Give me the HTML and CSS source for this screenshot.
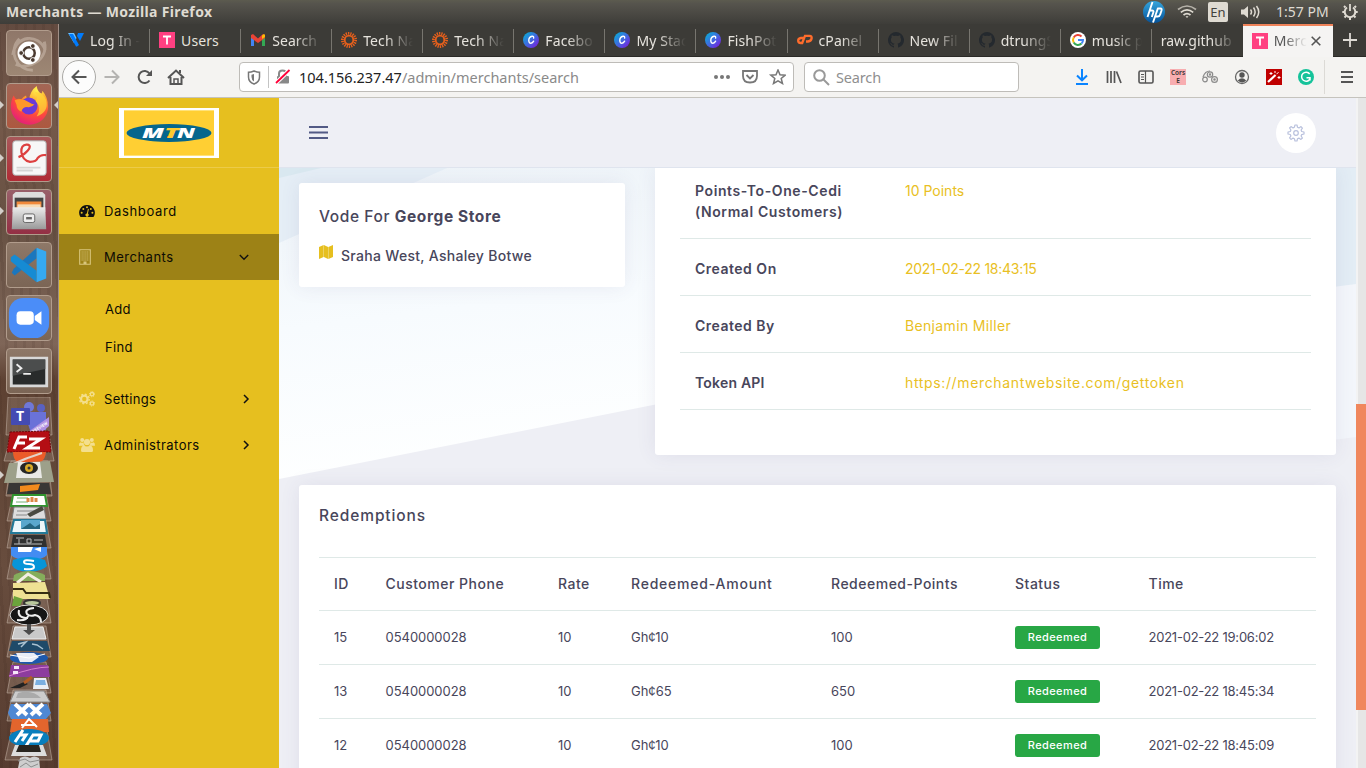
FILE: index.html
```html
<!DOCTYPE html>
<html lang="en">
<head>
<meta charset="utf-8">
<title>Merchants</title>
<link rel="stylesheet" href="styles.css">
</head>
<body>
<svg width="0" height="0" class="defs">
  <defs>
    <linearGradient id="canva" x1="0" y1="0" x2="1" y2="1"><stop offset="0" stop-color="#00b8d4"/><stop offset=".5" stop-color="#3f6be0"/><stop offset="1" stop-color="#8210dc"/></linearGradient>
    <radialGradient id="fox" cx=".7" cy=".1" r="1"><stop offset="0" stop-color="#fff44f"/><stop offset=".35" stop-color="#ffa02a"/><stop offset=".65" stop-color="#ff4a3c"/><stop offset="1" stop-color="#e01a82"/></radialGradient>
    <linearGradient id="metal" x1="0" y1="0" x2="0" y2="1"><stop offset="0" stop-color="#ececec"/><stop offset="1" stop-color="#999"/></linearGradient>
    <linearGradient id="hpg" x1="0" y1="0" x2="0" y2="1"><stop offset="0" stop-color="#35a5dc"/><stop offset="1" stop-color="#04529a"/></linearGradient>
    <symbol id="i-canva" viewBox="0 0 16 16"><circle cx="8" cy="8" r="8" fill="url(#canva)"/><path d="M10.600 6.100c.3-1.400-.5-2-1.500-1.900C7 4.500 5.700 6.600 5.800 8.800c.1 1.700 1 2.500 2.100 2.400 1.200-.1 2.100-.9 2.700-2" fill="none" stroke="#fff" stroke-width="1.400" stroke-linecap="round"/></symbol>
    <symbol id="i-sun" viewBox="0 0 16 16"><circle cx="8" cy="8" r="4.300" fill="none" stroke="#e8601c" stroke-width="1.800"/><circle cx="8" cy="8" r="6.600" fill="none" stroke="#e8601c" stroke-width="2.800" stroke-dasharray="1.300 1"/></symbol>
    <symbol id="i-git" viewBox="0 0 16 16"><path d="M8 0a8 8 0 0 0-2.500 15.600c.4.1.5-.2.500-.4v-1.500c-2.200.5-2.700-.9-2.700-.9-.4-.9-.9-1.200-.9-1.200-.7-.5.1-.5.100-.5.8.1 1.200.8 1.200.8.7 1.200 1.900.9 2.300.7.1-.5.3-.9.500-1.100-1.800-.2-3.600-.9-3.600-4 0-.9.300-1.600.8-2.100-.1-.2-.4-1 .1-2.100 0 0 .7-.2 2.200.8a7.600 7.600 0 0 1 4 0c1.500-1 2.200-.8 2.200-.8.4 1.100.2 1.900.1 2.100.5.600.8 1.300.8 2.100 0 3.100-1.900 3.800-3.700 4 .3.300.6.800.6 1.500v2.200c0 .2.100.5.500.4A8 8 0 0 0 8 0z" fill="#24292e"/></symbol>
    <symbol id="i-t" viewBox="0 0 16 16"><rect width="16" height="16" fill="#ff4081"/><path d="M4 4.500h8M8 4.500V12.500" stroke="#fff" stroke-width="1.800"/></symbol>
    <symbol id="i-hp" viewBox="0 0 24 24"><circle cx="12" cy="12" r="11" fill="url(#hpg)"/><path d="M10.500 2L5.500 17M7.500 10.500h2.500q2 0 1.300 2L9.800 17M16 8L11 22.500M15.500 8.500h3q1.600 0 1 2l-1.300 4q-.6 2-2.500 2h-3" fill="none" stroke="#fff" stroke-width="1.900"/></symbol>
  </defs>
</svg>
<div class="screen">
  <header class="panel">
    <span class="panel-title">Merchants — Mozilla Firefox</span>
    <div class="panel-tray">
      <svg width="24" height="24"><use href="#i-hp"/></svg>
      <svg class="wifi" width="20" height="16" viewBox="0 0 20 16" fill="none" stroke="#dfdbd2" stroke-width="1.700"><path d="M1 5.500q9-7 18 0" opacity=".7"/><path d="M3.800 8.300q6.200-4.800 12.400 0"/><path d="M6.500 11q3.500-2.700 7 0"/><path d="M8.500 12.200h3L10 14z" fill="#dfdbd2" stroke="none"/></svg>
      <span class="lang">En</span>
      <svg class="sound" width="21" height="16" viewBox="0 0 21 16" fill="none" stroke="#dfdbd2" stroke-width="1.500"><path d="M1 5.500h3l4-3.500v12l-4-3.500H1z" fill="#dfdbd2" stroke="none"/><path d="M10.500 5.500q2 2.500 0 5M13.500 3.500q3.300 4.500 0 9M16.500 2q4.500 6 0 12"/></svg>
      <span class="clock">1:57 PM</span>
      <svg width="16" height="16" viewBox="0 0 16 16" fill="none" stroke="#dfdbd2"><path d="M5 3.500a5.300 5.300 0 1 0 6 0" stroke-width="2"/><path d="M8 0v7" stroke-width="1.800"/><path d="M3.500 3.500L2 2M12.500 3.500L14 2M2.500 8H.3M13.500 8h2.200M4 12l-1.500 1.500M12 12l1.500 1.500M8 13.500V16" stroke-width="2"/></svg>
    </div>
  </header>
  <div class="desktop">
    <nav class="dock">
      <div class="tile ubuntu"><svg viewBox="0 0 46 46"><path d="M6 25C9 4 33 2 40 20M39 11c5 18-15 30-30 24M13 8C1 20 9 41 27 41" fill="none" stroke="#d9cabd" opacity=".45" stroke-width="3"/><circle cx="23" cy="23" r="12" fill="#fff"/><circle cx="23" cy="23" r="6" fill="none" stroke="#4a3a30" stroke-width="2.600"/><g fill="#4a3a30" stroke="#fff"><circle cx="14.800" cy="23" r="2.500"/><circle cx="27" cy="15.700" r="2.500"/><circle cx="27" cy="30.300" r="2.500"/></g></svg></div>
      <div class="tile firefox"><svg viewBox="0 0 46 46"><path d="M7 12q1 3 3 4 2-1 5 0 2-3 5-4 0 4 3 5 1-10 8-15 1 6 5 8 1-1 1-3 6 7 6 17A19 18 0 0 1 4 24q0-7 3-12z" fill="url(#fox)"/><circle cx="23" cy="23" r="9" fill="#6b3ad8"/><path d="M8 17q8-3 15 2 4 3 6 2-3 4-8 3-5 0-6 5-5-2-5-7z" fill="#ff9828"/><path d="M29 8q4 5 1 10 7 7 1 16 13-5 10-17-2-7-12-9z" fill="#ffd13a" opacity=".75"/></svg></div>
      <div class="tile pdf"><svg viewBox="0 0 46 46"><rect x="6" y="4" width="35" height="36" rx="3" fill="#f7f7f7" stroke="#aaa"/><path d="M10 32h25M10 35h17" stroke="#d5d5d5" stroke-width="2"/><path d="M12 21C18 19 29 9 21 8c-9-1-8 16 3 18q7 0 8-4 3-4 9-3" fill="none" stroke="#dd4040" stroke-width="2.300"/></svg></div>
      <div class="tile files"><svg viewBox="0 0 46 46"><path d="M6 5l3-3h28l3 3v18H6z" fill="#ddd"/><path d="M8 8h30v15H8z" fill="#444"/><path d="M10 12h26v11H10z" fill="#f18a3c"/><path d="M11 15h24v8H11z" fill="#f8ddb9"/><path d="M6 18h34l1 23H5z" fill="url(#metal)"/><rect x="17" y="25" width="12" height="9" rx="2" fill="#eee" stroke="#666"/><path d="M20 29.500h6" stroke="#666" stroke-width="2.500"/></svg></div>
      <div class="tile"><svg viewBox="0 0 46 46"><path d="M31 5v11L8 34l-3-3 2-4z" fill="#1b76bd"/><path d="M31 40V29L8 12l-4 3v4l27 22z" fill="#168bd3"/><path d="M31 5l10 4v28l-10 4z" fill="#35a9f1"/></svg></div>
      <div class="tile"><svg viewBox="0 0 46 46"><rect x="2" y="2" width="42" height="42" rx="15" fill="#4b8df8"/><rect x="10" y="16" width="18" height="14" rx="4" fill="#fff"/><path d="M29 21l7-5v14l-7-5z" fill="#fff"/></svg></div>
      <div class="tile"><svg viewBox="0 0 46 46"><path d="M3 8h40v32H3z" fill="#d8d8d8"/><path d="M6 11h34v26H6z" fill="#292b2b"/><path d="M6 11h34v10L6 28z" fill="#4b4d4d"/><path d="M10 16l5 4-5 4M17 26h8" fill="none" stroke="#eee" stroke-width="2"/></svg></div>
      <svg class="stack" viewBox="0 397 58 371">
        <g fill="#bba898" fill-opacity=".25" stroke="#c4b3a5" stroke-opacity=".55"><path d="M8 397h42l2 38H6z"/><path d="M11 435h38l5 26H4z"/><path d="M11 461h37l4 35H6z"/><path d="M13 494h33l5 27H7z"/><path d="M12 520h34l5 28H7z"/><path d="M13 548h33l5 31H7z"/><path d="M13 592h33l5 31H7z"/><path d="M13 626h33l5 31H7z"/><path d="M13 662h33l5 31H7z"/><path d="M13 690h33l5 31H7z"/><path d="M13 724h33l6 36H5z"/></g>
        <circle cx="29" cy="407" r="5" fill="#6f78d8"/><circle cx="41" cy="408" r="4" fill="#5961c3"/><path d="M24 412h22v18H30z" fill="#6a72d8"/><rect x="11" y="408" width="19" height="17" rx="1" fill="#444bb3"/><text x="16" y="421" class="dock-letter">T</text><path d="M28 432l21-15v9l-12 11z" fill="#b091e2"/><text transform="translate(33 433) rotate(-31)" class="ribbon">PREVIEW</text>
        <path d="M10 432l39-1 2 21H7z" fill="#b40e14" stroke="#710b0c" stroke-dasharray="2 1"/><path d="M27 437H19l-5 12M17 443h8M29 439h12L27 448h13" fill="none" stroke="#fff" stroke-width="3"/>
        <path d="M13 452h33q-1 13-17 13t-16-13z" fill="#eb5b29"/><path d="M11 465q15-7 31-12" stroke="#e4d2c8" stroke-width="2"/>
        <path d="M9 463l41-2 4 21-50 1z" fill="#9da08a"/><path d="M18 462h22l2 16H16z" fill="#e9e9e6"/><ellipse cx="29" cy="468" rx="9" ry="6" fill="#252525"/><circle cx="29" cy="468" r="4" fill="#d8aa27"/><circle cx="29" cy="468" r="1.500" fill="#333"/>
        <path d="M9 483h40l2 11H7z" fill="#393735"/><path d="M20 486l20-2-2 6-18 2z" fill="#f28a1d"/>
        <path d="M13 495h32l2 11H11z" fill="#fff" stroke="#30932e" stroke-width="2"/><path d="M17 498h11M16 502h12" stroke="#75b174"/><path d="M28 502V498M32 502v-5M36 502v-4" stroke="#dc8847" stroke-width="3"/>
        <path d="M14 507h30l2 12H12z" fill="#ddd" stroke="#777"/><path d="M17 511h17M16 515h11" stroke="#888"/><path d="M27 514l15-8 2 4-14 7z" fill="#4a4a40"/>
        <path d="M14 520h31l2 13H11z" fill="#eef7fb" stroke="#237998" stroke-width="2"/><path d="M21 520h19v9H21z" fill="#5ba7cd"/><path d="M21 529l9-6 5 4 5-3v5z" fill="#256580"/>
        <path d="M13 535h32l2 12H11z" fill="#303030"/><path d="M16 538h8M19 539v5M27 539h4v4h-4zM34 540h9M14 544h28" stroke="#bbb" fill="none"/>
        <path d="M11 547h36v8q-4 5-18 5t-18-5z" fill="#438cf2"/><path d="M18 547h15l-2 5H18zM34 549l7-2v5z" fill="#fff"/>
        <path d="M13 560q16-6 32 0l2 6q-4 5-18 6-15-1-17-7z" fill="#0795d8"/><path d="M34 561q-10-2-10 1 0 2 5 2t5 3-10 2" fill="none" stroke="#fff" stroke-width="2"/>
        <path d="M14 575q15-8 31 0v6H13z" fill="#85ad5b"/><path d="M17 583l11-9 13 8" fill="none" stroke="#f2eee2" stroke-width="3"/>
        <path d="M13 583l32-1 5 17H13z" fill="#eee193"/><path d="M13 589h10l3 4h23l1 5" fill="none" stroke="#342d12" stroke-width="2"/>
        <path d="M14 596l9 3-3 7h-8z" fill="#6ba33c"/><ellipse cx="32" cy="603" rx="8" ry="3" fill="#b9c89d" stroke="#333" stroke-width="2"/>
        <ellipse cx="29" cy="615" rx="19" ry="10" fill="#151515" stroke="#ddd"/><path d="M19 610q-2 8 9 8M34 608q-10 1-7 6 3 3 8 1 6 1 6 7M28 616q-1 5-11 4" fill="none" stroke="#eee" stroke-width="2"/>
        <path d="M15 627h28l3 12H12z" fill="#c9c9c9" stroke="#eee"/><path d="M27 624h4v6h4l-6 5-6-5h4z" fill="#4c4c4c"/>
        <path d="M12 641h35l3 10H9z" fill="#1f4a69"/><path d="M18 644l8-2-5 5M32 644l5 1 6 4" fill="none" stroke="#aac2d1" stroke-width="1.500"/>
        <ellipse cx="29" cy="658" rx="19" ry="6" fill="#1d59ac"/><path d="M16 653h18l5 4-7 5H20z" fill="#e8ecf5"/><path d="M10 655l19 3 16-4" fill="none" stroke="#fff"/>
        <path d="M11 665h37l2 12H9z" fill="#8d3c9e"/><path d="M9 676q25-9 40-9" stroke="#d581cf" fill="none"/><path d="M14 666h5v3h-5zM13 671h5v3h-5z" fill="#f5e7f9"/>
        <path d="M10 688l14-6 4 2-8 4z" fill="#222"/><path d="M24 683l8-6" stroke="#b35d25" stroke-width="3"/><path d="M34 678h12l3 11H33z" fill="#e9eef5"/><path d="M36 680h9l1 5H35z" fill="#7bafe0"/>
        <path d="M15 691h29l6 11H10z" fill="#ccc" stroke="#888"/><path d="M18 693q14-4 23 5H16z" fill="#aaa"/>
        <path d="M11 704h36l4 9-5 6H11l-3-6z" fill="#4e88d3"/><path d="M15 704l12 11M29 704L17 715M29 704l12 11M43 704L31 715" stroke="#fff" stroke-width="4"/>
        <path d="M12 719h36l1 13H10z" fill="#e3652d"/><path d="M22 728l7-9 8 8M21 725h15" fill="none" stroke="#fff" stroke-width="2"/>
        <ellipse cx="29" cy="738" rx="20" ry="9" fill="#087ebd"/><path d="M23 730l-8 12M20 735h6l-4 6M33 735l-7 11M32 735h9l-3 6h-8" fill="none" stroke="#fff" stroke-width="3"/>
        <path d="M15 745h28l4 11H11z" fill="#ddd"/><path d="M19 745h20l2 7H16z" fill="#29251f"/>
        <path d="M20 758q5-3 10 0 4-3 9 0l1 10H18z" fill="#cecece"/><path d="M18 761l7-2 5 3 10-2M20 767l6-4 5 4 7-3" fill="none" stroke="#8e8e8e"/>
      </svg>
      <i class="pip p1"></i><i class="pip p2"></i><i class="pip p3"></i><i class="pip p4"></i><i class="pip p5"></i>
    </nav>
    <div class="browser">
      <div class="tabs">
        <div class="tab"><svg viewBox="0 0 16 16"><path d="M0 1h6l2.500 5L6 11z" fill="#6fc3ff"/><path d="M1 2h4l6 11-2 1.500H8z" fill="#007bfc"/><path d="M10 1h6l-4 8-3-5z" fill="#007bfc"/></svg><span>Log In -</span></div>
        <div class="tab"><svg><use href="#i-t"/></svg><span>Users</span></div>
        <div class="tab"><svg viewBox="0 0 16 16"><path d="M1 14V5l3 2v7z" fill="#4285f4"/><path d="M12 14V7l3-2v9z" fill="#34a853"/><path d="M1 6V3l2-1 5 4.500L13 2l2 1v3l-7 5z" fill="#ea4335"/><path d="M12 3.500L14 2q1.500.5 1 3l-3 2z" fill="#fbbc04"/></svg><span>Search</span></div>
        <div class="tab"><svg><use href="#i-sun"/></svg><span>Tech Na</span></div>
        <div class="tab"><svg><use href="#i-sun"/></svg><span>Tech Na</span></div>
        <div class="tab"><svg><use href="#i-canva"/></svg><span>Facebo</span></div>
        <div class="tab"><svg><use href="#i-canva"/></svg><span>My Stac</span></div>
        <div class="tab"><svg><use href="#i-canva"/></svg><span>FishPot</span></div>
        <div class="tab"><svg viewBox="0 0 16 16" fill="none" stroke="#ff6c2c" stroke-width="2.300"><path d="M7 6H4Q1 6.500 1.200 9q.3 2.200 3 2h1L8 3.800h4.500Q15 4 14.600 6.500T11 9.500H9"/></svg><span>cPanel</span></div>
        <div class="tab"><svg><use href="#i-git"/></svg><span>New Fil</span></div>
        <div class="tab"><svg><use href="#i-git"/></svg><span>dtrungS</span></div>
        <div class="tab"><svg viewBox="0 0 16 16" fill="none" stroke-width="2"><circle cx="8" cy="8" r="8" fill="#fff"/><path d="M3.700 5.500A5 5 0 0 1 11.500 4.500" stroke="#ea4335"/><path d="M3.700 5.500a5 5 0 0 0 0 5" stroke="#fbbc05"/><path d="M3.700 10.500a5 5 0 0 0 7.800 1" stroke="#34a853"/><path d="M8 8h5q0 2.300-1.500 3.500" stroke="#4285f4"/></svg><span>music p</span></div>
        <div class="tab bare"><span>raw.github</span></div>
        <div class="tab active"><svg><use href="#i-t"/></svg><span>Merc</span><svg class="close" viewBox="0 0 10 10"><path d="M.7.7l8.600 8.600M9.300.7L.7 9.300" stroke="#555" stroke-width="1.600"/></svg></div>
        <svg class="plus" viewBox="0 0 14 14"><path d="M7 0v14M0 7h14" stroke="#dedbd5" stroke-width="1.800"/></svg>
      </div>
      <div class="toolbar">
        <span class="back"><svg width="16" height="16" viewBox="0 0 16 16" fill="none" stroke="#555" stroke-width="2"><path d="M15.500 8H1.500M8 1.500L1.500 8 8 14.500"/></svg></span>
        <svg class="fwd" width="16" height="16" viewBox="0 0 16 16" fill="none" stroke="#b4b3b1" stroke-width="2"><path d="M.5 8h14M8 1.500L14.500 8 8 14.500"/></svg>
        <svg class="reload" width="16" height="16" viewBox="0 0 16 16" fill="none" stroke="#555" stroke-width="2"><path d="M12.500 11.500A6 6 0 1 1 12.500 4.500"/><path d="M15 1v6H9z" fill="#555" stroke="none"/></svg>
        <svg class="home" width="18" height="16" viewBox="0 0 18 16" fill="none" stroke="#555" stroke-width="2"><path d="M1 9l8-7.500L17 9M3.500 8v7h11V8"/><path d="M7 15v-5h4v5" stroke-width="1.500"/><path d="M13 1v3"/></svg>
        <div class="urlbar">
          <svg class="shield" width="14" height="15" viewBox="0 0 14 15"><path d="M7 1q3 1.300 5.500 1.300V7q0 5-5.500 7Q1.500 12 1.500 7V2.300Q4 2.300 7 1z" fill="none" stroke="#777" stroke-width="1.500"/><path d="M7 4v7.500Q4.500 10 4.500 7V4.800z" fill="#777"/></svg>
          <i class="divider"></i>
          <svg class="lock" width="16" height="16" viewBox="0 0 16 16"><path d="M4 7V4.500Q4 1.500 7.500 1.500T11 4.500V7" fill="none" stroke="#888" stroke-width="2"/><rect x="2" y="7" width="12" height="7.500" rx="1" fill="#888"/><path d="M1 14L14.500 1" stroke="#fff" stroke-width="4"/><path d="M1 14L14.500 1" stroke="#ff0039" stroke-width="1.800"/></svg>
          <span class="url"><b>104.156.237.47</b>/admin/merchants/search</span>
          <svg width="72" height="16" viewBox="0 0 72 16" class="acts" fill="none" stroke="#777"><g fill="#777" stroke="none"><circle cx="2" cy="8" r="2"/><circle cx="8" cy="8" r="2"/><circle cx="14" cy="8" r="2"/></g><path d="M29 2h14v5q0 6.500-7 6.500T29 7zM32.500 6l3.500 3.500L39.500 6" stroke-width="1.800"/><path d="M64 1l2 4.800 5.200.4-4 3.300 1.300 5-4.500-2.700-4.500 2.700 1.300-5-4-3.300 5.200-.4z" stroke-width="1.500"/></svg>
        </div>
        <div class="searchbar"><svg width="17" height="17" viewBox="0 0 17 17" fill="none" stroke="#999" stroke-width="2"><circle cx="6.500" cy="6.500" r="5.300"/><path d="M10.500 10.500l5.500 5.500"/></svg><span>Search</span></div>
        <div class="exts">
          <svg viewBox="0 0 16 16" fill="none" stroke="#0a84ff" stroke-width="2"><path d="M8 0v11M3 6.500l5 4.800 5-4.800M2 15h12"/></svg>
          <svg viewBox="0 0 16 16" stroke="#555" stroke-width="1.700"><path d="M1.500 2v12M5 2v12M8.500 2v12M10.500 2.500L15 14"/></svg>
          <svg viewBox="0 0 16 16" fill="none" stroke="#555" stroke-width="1.600"><rect x="1" y="2" width="14" height="12" rx="1.500"/><path d="M7.500 2v12M3 5.500h3M3 8h3M3 10.500h3" stroke-width="1.200"/></svg>
          <span class="cors">Cors<br>E</span>
          <svg viewBox="0 0 16 16" fill="none" stroke="#8b8b8b" stroke-width="1.200"><circle cx="3" cy="10.500" r="2.300"/><circle cx="8" cy="5.500" r="2.700"/><circle cx="12.500" cy="10.500" r="2.900"/><circle cx="12.500" cy="10.500" r=".7"/><circle cx="8" cy="5.500" r=".6"/><path d="M1 8q2-6 7-6"/></svg>
          <svg viewBox="0 0 16 16"><circle cx="8" cy="8" r="6.500" fill="none" stroke="#666" stroke-width="1.300"/><circle cx="8" cy="6" r="2.700" fill="#555"/><path d="M3.800 11.500q4.200-4.500 8.400 0-4 4-8.400 0z" fill="#555"/></svg>
          <svg viewBox="0 0 16 16"><path d="M0 0h16v16H0z" fill="#c00000"/><path d="M2 13l7.500-7" stroke="#fff" stroke-width="2.200"/><path d="M10.500 5.200l2-2M5 3v3M3.500 4.500h3M9 2v2M13 7v3M11.500 8.500h3" stroke="#fff"/></svg>
          <svg viewBox="0 0 16 16"><circle cx="8" cy="8" r="8" fill="#15c39a"/><path d="M11.700 5A4.500 4.500 0 1 0 12 10M8.500 8.700H12V11.500" fill="none" stroke="#fff" stroke-width="1.500"/></svg>
        </div>
        <i class="divider tall"></i>
        <svg class="menu" width="12" height="12" viewBox="0 0 12 12"><path d="M0 1h12M0 6h12M0 11h12" stroke="#555" stroke-width="2"/></svg>
      </div>
      <div class="page">
        <aside class="sidebar">
          <div class="brand"><svg width="100" height="50" viewBox="0 0 100 50"><path d="M0 0h100v50H0z" fill="#fff"/><path d="M5 2h90v46H5z" fill="#ffe27a"/><path d="M5 3h90v44H5z" fill="#ffcf33"/><ellipse cx="50" cy="25" rx="42.500" ry="9" fill="#05668d"/><path d="M48 28h5l-1 2h-4z" fill="#d8262e"/><text y="29.500" class="mtn"><tspan x="23" textLength="22" lengthAdjust="spacingAndGlyphs">M</tspan><tspan x="45" class="mtn-t" textLength="15" lengthAdjust="spacingAndGlyphs">T</tspan><tspan x="58" textLength="18" lengthAdjust="spacingAndGlyphs">N</tspan></text></svg></div>
          <ul class="nav">
            <li><svg class="ico" viewBox="0 0 16 14"><path d="M8 1a7.700 7.700 0 0 0-6.500 12h13A7.700 7.700 0 0 0 8 1z" fill="#111"/><g fill="#e6bf1f"><circle cx="2.700" cy="8.800" r="1"/><circle cx="4.300" cy="4.900" r="1"/><circle cx="8" cy="3.200" r="1"/><circle cx="11.800" cy="4.900" r="1"/><circle cx="13.400" cy="8.800" r="1"/><path d="M8.900 4.800l1 .2-1 4.600a1.600 1.600 0 1 1-1-.2z"/></g></svg><span class="n1">Dashboard</span></li>
            <li class="on"><svg class="ico" viewBox="0 0 16 16"><path d="M.7.700h10.600v14.600H.7z" fill="none" stroke="#d9c67c" stroke-width="1.100"/><path d="M2.500 3h7M2.500 5h7M2.500 7h7M2.500 9h7M2.500 11h7" stroke="#d9c67c" stroke-dasharray="1.200 .7"/><path d="M4.500 12.500h3V15h-3z" fill="#d9c67c"/></svg><span class="n2">Merchants</span><svg class="arrow down" viewBox="0 0 10 10"><path d="M.8 3L5 7.200 9.200 3" fill="none" stroke="#111" stroke-width="1.400"/></svg></li>
            <li class="sub first"><span>Add</span></li>
            <li class="sub last"><span>Find</span></li>
            <li><svg class="ico" viewBox="0 0 16 16" fill="none" stroke="#f4df8d"><circle cx="5.300" cy="8" r="3.300" stroke-width="2.200"/><circle cx="5.300" cy="8" r="4.900" stroke-width="1.300" stroke-dasharray="1.900 1.950"/><circle cx="13" cy="3.200" r="1.700" stroke-width="1.300"/><circle cx="13" cy="3.200" r="2.600" stroke-dasharray="1 1.050"/><circle cx="13" cy="12.500" r="1.700" stroke-width="1.300"/><circle cx="13" cy="12.500" r="2.600" stroke-dasharray="1 1.050"/></svg><span class="n3">Settings</span><svg class="arrow" viewBox="0 0 10 10"><path d="M3 1l4 4-4 4" fill="none" stroke="#111" stroke-width="1.500"/></svg></li>
            <li><svg class="ico" viewBox="0 0 16 16" fill="#f4df8d"><circle cx="3.200" cy="3" r="2"/><circle cx="12.800" cy="3" r="2"/><circle cx="8" cy="5" r="3.100"/><path d="M0 8.500Q0 5.500 1.500 5.200q1.500 1 3 0 0 2 1.500 3.600H1Q0 9 0 8.500zM16 8.500q0-3-1.500-3.300-1.500 1-3 0 0 2-1.500 3.600h5q1 0 1-.3zM2 13.500Q2 9 4.800 8.500q3.200 2 6.400 0Q14 9 14 13.500q0 1.500-1.500 1.500h-9Q2 15 2 13.500z"/></svg><span class="n4">Administrators</span><svg class="arrow" viewBox="0 0 10 10"><path d="M3 1l4 4-4 4" fill="none" stroke="#111" stroke-width="1.500"/></svg></li>
          </ul>
        </aside>
        <main class="main">
          <div class="topnav">
            <svg width="19" height="13" viewBox="0 0 19 13"><path d="M0 1h19M0 6.500h19M0 12h19" stroke="#525a85" stroke-width="1.900"/></svg>
            <span class="gear"><svg width="18" height="18" viewBox="0 0 18 18" fill="none" stroke="#b9c1dd" stroke-width="1.200" stroke-linejoin="round"><circle cx="9" cy="9" r="2.300"/><path d="M7.300 3.300L8 1h2l.5 2.300 1.500.6 2-1.300 1.400 1.500-1.300 1.900.6 1.500 2.300.5v2l-2.300.6-.6 1.400 1.300 2-1.500 1.400-2-1.300-1.400.6-.5 2.300H8l-.6-2.300-1.400-.6-2 1.300-1.400-1.500 1.300-1.900-.6-1.500L1 10V8l2.300-.5.6-1.500-1.300-2L4 2.600l2 1.300z"/></svg></span>
          </div>
          <div class="content">
            <svg class="backdrop" viewBox="0 0 1077 600" preserveAspectRatio="none"><defs><linearGradient id="sky" x1="0" y1="0" x2=".2" y2="1"><stop offset="0" stop-color="#edf3f8"/><stop offset=".5" stop-color="#f7fbfe"/><stop offset="1" stop-color="#feffff"/></linearGradient></defs><path d="M0 0h500v212L0 311z" fill="url(#sky)"/><path d="M0 0h168L0 75z" fill="#e5eef6"/><path d="M0 0h42L0 10z" fill="#d9e8f0"/><path d="M1000 0h77v269l-77 10z" fill="#f3f6fb"/><path d="M1000 0h77v116l-77 10z" fill="#e3edf5"/></svg>
            <div class="row">
              <section class="card store"><h5>Vode For <b>George Store</b></h5><p><svg width="14" height="15" viewBox="0 0 14 15" fill="#e6bf1f"><path d="M0 2l4.600-2v12L0 14zM4.900 0l4.200 2v12l-4.200-2zM9.400 2L14 0v12l-4.600 2z"/></svg><span>Sraha West, Ashaley Botwe</span></p></section>
              <section class="card details">
                <dl><dt class="d1">Points-To-One-Cedi<br>(Normal Customers)</dt><dd class="v1">10 Points</dd></dl>
                <dl><dt class="d2">Created On</dt><dd class="v2">2021-02-22 18:43:15</dd></dl>
                <dl><dt class="d3">Created By</dt><dd class="v3">Benjamin Miller</dd></dl>
                <dl><dt class="d4">Token API</dt><dd class="v4">https://merchantwebsite.com/gettoken</dd></dl>
              </section>
            </div>
            <section class="card redemptions">
              <h5>Redemptions</h5>
              <div class="table">
                <div class="tr th"><span>ID</span><span>Customer Phone</span><span>Rate</span><span class="wide">Redeemed-Amount</span><span>Redeemed-Points</span><span>Status</span><span>Time</span></div>
                <div class="tr"><span>15</span><span>0540000028</span><span>10</span><span>Gh¢10</span><span>100</span><span><em>Redeemed</em></span><span class="time">2021-02-22 19:06:02</span></div>
                <div class="tr"><span>13</span><span>0540000028</span><span>10</span><span>Gh¢65</span><span>650</span><span><em>Redeemed</em></span><span class="time">2021-02-22 18:45:34</span></div>
                <div class="tr"><span>12</span><span>0540000028</span><span>10</span><span>Gh¢10</span><span>100</span><span><em>Redeemed</em></span><span class="time">2021-02-22 18:45:09</span></div>
              </div>
            </section>
          </div>
        </main>
        <div class="scroll"><i></i></div>
      </div>
    </div>
  </div>
</div>
</body>
</html>
```
FILE: styles.css
```css
* { box-sizing: border-box; }
body { margin: 0; overflow: hidden; font-family: Inter, sans-serif; }
.defs { position: absolute; }
.screen { width: 1366px; height: 768px; overflow: hidden; display: flex; flex-direction: column; }
.panel, .tabs, .toolbar { font-family: "Noto Sans", sans-serif; }
svg { display: block; flex: none; }

/* system panel */
.panel { height: 24px; flex: none; display: flex; justify-content: space-between; align-items: center; padding: 0 8px 0 6px; background: linear-gradient(#5c5b4f, #56544d 15%, #3e3d39); color: #dfdbd2; }
.panel-title { font-size: 14px; font-weight: 700; letter-spacing: .34px; line-height: 24px; }
.panel-tray { display: flex; align-items: center; }
.wifi { margin-left: 11px; }
.lang { width: 20px; height: 20px; margin-left: 11px; border-radius: 2px; background: #dfdbd2; color: #42413d; font-size: 13px; line-height: 20px; text-align: center; }
.sound { margin-left: 12px; }
.clock { width: 56px; margin: -2px 10px 0 15px; font-size: 14px; white-space: nowrap; }

.desktop { flex: 1; display: flex; min-height: 0; }

/* launcher */
.dock { position: relative; width: 59px; flex: none; display: flex; flex-direction: column; align-items: center; gap: 7px; padding: 6px 1px 0 0; background: repeating-linear-gradient(87deg, rgba(35,18,12,.08) 0 3px, transparent 3px 9px), linear-gradient(#634b40, #75594a 13%, #675143 27%, #7f6658 43%, #5d4132 48%, #684d3e 73%, #573c30); border-right: 1px solid #a08f87; }
.tile { width: 46px; height: 46px; flex: none; border: 1px solid #b19c8c; border-radius: 4px; background: linear-gradient(#8e7868, #7b6555); }
.tile svg { width: 44px; height: 44px; }
.ubuntu { background: linear-gradient(#8f7769, #9d8774); }
.firefox { background: linear-gradient(#a36655, #ad5840); }
.pdf { background: linear-gradient(#a8585a, #b02b35); }
.files { background: linear-gradient(#98606a, #942f44); }
.stack { width: 58px; height: 371px; margin-top: -4px; }
.dock-letter { font: 700 14px "Open Sans", sans-serif; fill: #fff; }
.ribbon { font: 700 4px "Open Sans", sans-serif; fill: #fff; }
.pip { position: absolute; left: 0; border: 4px solid transparent; border-left-color: #d4cfca; }
.p1 { top: 77px; }
.p2 { top: 130px; }
.p3 { top: 183px; }
.p4 { top: 447px; }
.p5 { top: 77px; left: 50px; border-left-color: transparent; border-right-color: #d4cfca; }

/* browser chrome */
.browser { flex: 1; min-width: 0; display: flex; flex-direction: column; }
.tabs { height: 33px; flex: none; display: flex; background: #3c3b37; border-bottom: 1px solid #2b2a27; }
.tab { width: 91.07px; flex: none; display: flex; align-items: center; gap: 6px; padding-left: 9px; color: #e6e3dd; background: linear-gradient(#77756f, #77756f) right 5px / 1px 24px no-repeat; }
.tab svg { width: 16px; height: 16px; }
.tab span { width: 56px; font-size: 14px; letter-spacing: .1px; white-space: nowrap; -webkit-mask-image: linear-gradient(90deg, #000 22px, transparent 50px); mask-image: linear-gradient(90deg, #000 22px, transparent 50px); }
.tab:nth-child(2) span { -webkit-mask-image: none; mask-image: none; }
.tab.bare { padding-left: 9px; }
.tab.bare span { width: 76px; letter-spacing: 0; -webkit-mask-image: linear-gradient(90deg, #000 50px, transparent 75px); mask-image: linear-gradient(90deg, #000 50px, transparent 75px); }
.tab:nth-child(13) { background: none; }
.tab.active { height: 33px; width: 90px; background: #f5f4f3; color: #555; border-top: 2px solid #ef835a; }
.tab.active svg { margin-top: -2px; }
.tab.active span { width: 35px; margin-top: -2px; -webkit-mask-image: linear-gradient(90deg, #000 10px, transparent 33px); mask-image: linear-gradient(90deg, #000 10px, transparent 33px); }
.tab.active .close { width: 10px; height: 10px; margin-left: -4px; }
.plus { width: 14px; height: 14px; margin: 9px 0 0 10px; }
.toolbar { height: 41px; flex: none; display: flex; align-items: center; background: #f4f3f1; border-bottom: 1px solid #c5c3bd; }
.back { width: 34px; height: 34px; margin-left: 3px; flex: none; border: 1px solid #aaa9a6; border-radius: 50%; background: #fcfcfc; display: flex; align-items: center; justify-content: center; }
.fwd { margin-left: 8px; }
.reload { margin-left: 17px; }
.home { margin-left: 14px; }
.urlbar, .searchbar { height: 30px; border: 1px solid #bebcb8; border-radius: 4px; background: #fff; display: flex; align-items: center; font-size: 14.500px; }
.urlbar { width: 555px; margin-left: 54px; }
.shield { margin-left: 7px; }
.divider { width: 1px; height: 22px; margin: 0 6px 0 7px; background: #c4c4c4; }
.divider.tall { height: 34px; margin: 0 0 0 10px; background: #dcdad6; }
.url { flex: 1; margin-left: 8px; color: #8a8a8a; }
.url b { font-weight: 400; color: #222; }
.acts { margin-right: 7px; }
.searchbar { width: 215px; margin-left: 10px; padding-left: 8px; gap: 6px; color: #8f8f8f; letter-spacing: -.15px; }
.exts { display: flex; gap: 16px; margin-left: 55px; }
.exts svg, .cors { width: 16px; height: 16px; flex: none; }
.cors { background: #f7adb0; color: #333; font-size: 6.500px; line-height: 7.500px; text-align: center; font-weight: 600; }
.menu { margin-left: 16px; }

/* admin page */
.page { flex: 1; display: flex; min-height: 0; }
.sidebar { width: 220px; flex: none; background: #e6bf1f; }
.brand { height: 70px; padding-top: 10px; display: flex; justify-content: center; align-items: flex-start; border-bottom: 1px solid #eccb49; }
.mtn { font: italic 900 13.500px "Open Sans", sans-serif; fill: #fff; }
.mtn-t { fill: #ffcb2f; }
.nav { list-style: none; margin: 0; padding: 20px 0 0; font-size: 13px; color: #0c0b04; letter-spacing: .3px; }
.nav li { height: 46px; display: flex; align-items: center; padding: 0 28px 0 20px; }
.nav .n1 { letter-spacing: .65px; }
.nav .n2 { letter-spacing: .5px; }
.nav .n4 { letter-spacing: .45px; }
.nav .on { background: #9d8216; }
.ico { width: 16px; height: 16px; margin-right: 9px; }
.arrow { width: 10px; height: 10px; margin-left: auto; }
.arrow.down { margin-right: 2px; }
.nav .sub { height: 38px; padding-left: 46px; }
.nav .first { margin-top: 10px; }
.nav .last { margin-bottom: 10px; }
.main { width: 1077px; flex: none; display: flex; flex-direction: column; background: #eeeff5; color: #48465b; }
.topnav { height: 70px; flex: none; display: flex; align-items: center; justify-content: space-between; padding: 0 40px 0 30px; border-bottom: 1px solid #dfe4ee; }
.gear { width: 40px; height: 40px; border-radius: 50%; background: #fff; display: flex; align-items: center; justify-content: center; }
.content { position: relative; flex: 1; min-height: 0; overflow: hidden; padding: 0 20px; }
.backdrop { position: absolute; left: 0; top: 0; width: 1077px; height: 600px; }
.row { position: relative; display: flex; align-items: flex-start; gap: 30px; }
.card { position: relative; background: #fff; border-radius: 3px; box-shadow: 0 0 20px rgba(82,63,125,.09); }
.store { width: 326px; height: 104px; margin-top: 15px; padding: 22px 20px; }
h5 { margin: 0; font-size: 15.500px; font-weight: 500; line-height: 24px; letter-spacing: .6px; }
.store h5 { font-weight: 450; }
.store p { margin: 15px 0 0; display: flex; gap: 8px; font-size: 14px; font-weight: 500; line-height: 24px; letter-spacing: .3px; }
.store p svg { margin-top: 1px; }
.details { width: 681px; height: 287px; padding: 0 25px; border-radius: 0 0 3px 3px; }
dl { margin: 0; height: 57px; display: flex; padding: 19px 15px 0; font-size: 14px; line-height: 21px; border-bottom: 1px solid #dfe9e7; }
dl:first-child { height: 71px; padding-top: 12px; }
dt { width: 210px; font-weight: 600; letter-spacing: .5px; }
.d1 { letter-spacing: .6px; }
.d4 { letter-spacing: .2px; }
dd { margin: 0; color: #e9bf24; }
.v2 { letter-spacing: -.27px; }
.v3 { letter-spacing: .34px; }
.v4 { letter-spacing: .64px; }
.redemptions { height: 330px; margin-top: 30px; padding: 19px 20px; }
.redemptions h5 { letter-spacing: .9px; }
.table { margin-top: 29px; font-size: 13px; }
.tr { height: 54.100px; display: grid; grid-template-columns: 51.500px 172.500px 73px 200px 184px 133.500px auto; align-items: center; padding: 0 0 0 15px; border-top: 1px solid #dfe9e7; letter-spacing: -.04px; }
.th { height: 52.500px; font-size: 14px; font-weight: 500; letter-spacing: .5px; }
.th .wide { letter-spacing: .78px; }
.time { letter-spacing: -.23px; }
.tr em { display: block; width: 85px; height: 23px; margin-top: 1px; border-radius: 3px; background: #28a745; color: #fff; font-style: normal; font-weight: 500; font-size: 11px; line-height: 23px; text-align: center; letter-spacing: .4px; }
.scroll { width: 10px; flex: none; padding-top: 306px; background: linear-gradient(90deg, #f3f3f3 2px, #e6e6e6 2px); }
.scroll i { display: block; height: 306px; background: #f0875d; }
```
